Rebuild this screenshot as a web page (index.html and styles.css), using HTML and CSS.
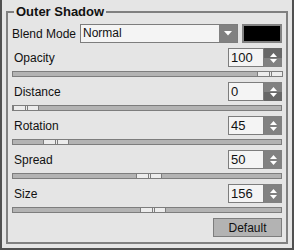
FILE: index.html
```html
<!DOCTYPE html>
<html lang="en">
<head>
    <meta charset="UTF-8">
    <title>Outer Shadow</title>
    <link rel="stylesheet" href="styles.css">
</head>
<body>
    <div class="window">
        <fieldset class="panel">
            <legend>Outer Shadow</legend>

            <div class="blend-row">
                <span class="blend-label">Blend Mode</span>
                <div class="select">
                    <span class="select-value">Normal</span>
                    <span class="select-button">
                        <svg width="8" height="5" viewBox="0 0 8 5"><path d="M0 0h8L4 4.5z" fill="#fff"/></svg>
                    </span>
                </div>
                <div class="swatch"></div>
            </div>

            <div class="param">
                <div class="param-head">
                    <span class="param-label">Opacity</span>
                    <div class="spin">
                        <span class="spin-value">100</span>
                        <span class="spin-button">
                            <span class="spin-up pressed"><svg width="7" height="4" viewBox="0 0 7 4"><path d="M3.5 0L7 4H0z" fill="#fff"/></svg></span>
                            <span class="spin-down"><svg width="7" height="4" viewBox="0 0 7 4"><path d="M0 0h7L3.5 4z" fill="#fff"/></svg></span>
                        </span>
                    </div>
                </div>
                <div class="slider"><div class="thumb" style="left: 244px"></div></div>
            </div>

            <div class="param">
                <div class="param-head">
                    <span class="param-label">Distance</span>
                    <div class="spin">
                        <span class="spin-value">0</span>
                        <span class="spin-button">
                            <span class="spin-up"><svg width="7" height="4" viewBox="0 0 7 4"><path d="M3.5 0L7 4H0z" fill="#fff"/></svg></span>
                            <span class="spin-down pressed"><svg width="7" height="4" viewBox="0 0 7 4"><path d="M0 0h7L3.5 4z" fill="#fff"/></svg></span>
                        </span>
                    </div>
                </div>
                <div class="slider"><div class="thumb" style="left: 0px"></div></div>
            </div>

            <div class="param">
                <div class="param-head">
                    <span class="param-label">Rotation</span>
                    <div class="spin">
                        <span class="spin-value">45</span>
                        <span class="spin-button">
                            <span class="spin-up"><svg width="7" height="4" viewBox="0 0 7 4"><path d="M3.5 0L7 4H0z" fill="#fff"/></svg></span>
                            <span class="spin-down"><svg width="7" height="4" viewBox="0 0 7 4"><path d="M0 0h7L3.5 4z" fill="#fff"/></svg></span>
                        </span>
                    </div>
                </div>
                <div class="slider"><div class="thumb" style="left: 30px"></div></div>
            </div>

            <div class="param">
                <div class="param-head">
                    <span class="param-label">Spread</span>
                    <div class="spin">
                        <span class="spin-value">50</span>
                        <span class="spin-button">
                            <span class="spin-up"><svg width="7" height="4" viewBox="0 0 7 4"><path d="M3.5 0L7 4H0z" fill="#fff"/></svg></span>
                            <span class="spin-down"><svg width="7" height="4" viewBox="0 0 7 4"><path d="M0 0h7L3.5 4z" fill="#fff"/></svg></span>
                        </span>
                    </div>
                </div>
                <div class="slider"><div class="thumb" style="left: 123px"></div></div>
            </div>

            <div class="param">
                <div class="param-head">
                    <span class="param-label">Size</span>
                    <div class="spin">
                        <span class="spin-value">156</span>
                        <span class="spin-button">
                            <span class="spin-up"><svg width="7" height="4" viewBox="0 0 7 4"><path d="M3.5 0L7 4H0z" fill="#fff"/></svg></span>
                            <span class="spin-down"><svg width="7" height="4" viewBox="0 0 7 4"><path d="M0 0h7L3.5 4z" fill="#fff"/></svg></span>
                        </span>
                    </div>
                </div>
                <div class="slider"><div class="thumb" style="left: 127px"></div></div>
            </div>

            <div class="footer">
                <button class="default-button">Default</button>
            </div>
        </fieldset>
    </div>
</body>
</html>
```

FILE: styles.css
```css
body {
    margin: 0;
    font-family: "Liberation Sans", Arial, sans-serif;
    font-size: 12px;
    color: #111;
    background: #e5e5e5;
}
.window {
    width: 294px;
    height: 250px;
    box-sizing: border-box;
    border: 2px solid #505050;
    border-top: none;
    padding: 4px;
    display: flex;
    flex-direction: column;
    background: #e5e5e5;
}
.panel {
    flex: 1;
    margin: 0;
    min-width: 0;
    border: 2px solid #808080;
    padding: 5px 4px 0 4px;
}
.panel legend {
    font-size: 13px;
    font-weight: bold;
    line-height: 15px;
    padding: 0 2px;
    margin-left: 2px;
    color: #111;
}
.blend-row {
    display: flex;
    align-items: center;
    height: 19px;
}
.blend-label {
    width: 68px;
}
.select {
    display: flex;
    width: 158px;
    height: 19px;
    box-sizing: border-box;
    border: 1px solid #7d7d7d;
    background: #f4f4f4;
}
.select-value {
    flex: 1;
    padding-left: 2px;
    line-height: 17px;
}
.select-button {
    width: 18px;
    background: #818181;
    display: flex;
    align-items: center;
    justify-content: center;
}
.swatch {
    margin-left: 4px;
    width: 40px;
    height: 19px;
    box-sizing: border-box;
    border: 2px solid #828282;
    background: #000;
}
.param {
    margin-top: 5px;
}
.param-head {
    display: flex;
    align-items: center;
    justify-content: space-between;
    height: 19px;
}
.param-label {
    padding-left: 2px;
}
.spin {
    display: flex;
    width: 54px;
    height: 19px;
}
.spin-value {
    width: 36px;
    box-sizing: border-box;
    border: 1px solid #7d7d7d;
    background: #f4f4f4;
    padding-left: 2px;
    font-size: 13px;
    line-height: 17px;
}
.spin-button {
    width: 18px;
    display: flex;
    flex-direction: column;
    background: #818181;
}
.spin-up, .spin-down {
    flex: 1;
    display: flex;
    justify-content: center;
}
.spin-up {
    align-items: flex-end;
    padding-bottom: 1px;
}
.spin-down {
    align-items: flex-start;
    padding-top: 1px;
}
.spin-button .pressed {
    background: #676767;
}
.slider {
    position: relative;
    margin-top: 4px;
    height: 6px;
    box-sizing: border-box;
    border: 1px solid #7d7d7d;
    background: #b3b3b3;
}
.thumb {
    position: absolute;
    top: -1px;
    width: 26px;
    height: 6px;
    box-sizing: border-box;
    border: 1px solid #7d7d7d;
    background: #ececec;
}
.thumb::before, .thumb::after {
    content: "";
    position: absolute;
    top: 0;
    bottom: 0;
    width: 1px;
    background: #7d7d7d;
}
.thumb::before {
    left: 11px;
}
.thumb::after {
    left: 13px;
}
.footer {
    display: flex;
    justify-content: flex-end;
    margin-top: 5px;
}
.default-button {
    width: 69px;
    height: 19px;
    margin: 0;
    padding: 0;
    border: 1px solid #7d7d7d;
    background: #b3b3b3;
    font-family: "Liberation Sans", Arial, sans-serif;
    font-size: 12px;
    color: #111;
}
```
